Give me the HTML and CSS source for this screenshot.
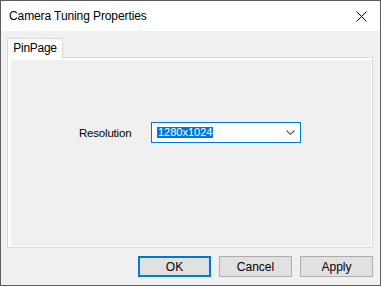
FILE: index.html
```html
<!DOCTYPE html>
<html>
<head>
    <title>Camera Tuning Properties</title>
    <link rel="stylesheet" href="styles.css">
</head>
<body>
    <div class="window">
        <div class="title-bar">
            <span class="title">Camera Tuning Properties</span>
            <button class="close-btn" title="Close">
                <svg width="11" height="11" viewBox="0 0 11 11">
                    <path d="M0.5 0.5 L10.5 10.5 M10.5 0.5 L0.5 10.5" stroke="#000" stroke-width="1" fill="none"/>
                </svg>
            </button>
        </div>

        <div class="dialog-body">
            <div class="tabs">
                <div class="tab active">PinPage</div>
            </div>

            <div class="tab-panel">
                <div class="page">
                    <div class="form-row">
                        <label for="resolution">Resolution</label>
                        <div class="combo" id="resolution">
                            <span class="combo-value">1280x1024</span>
                            <svg class="chevron" width="9" height="5" viewBox="0 0 9 5">
                                <path d="M0.5 0.5 L4.5 4.5 L8.5 0.5" stroke="#606060" stroke-width="1.1" fill="none"/>
                            </svg>
                        </div>
                    </div>
                </div>
            </div>

            <div class="button-row">
                <button class="button default">OK</button>
                <button class="button">Cancel</button>
                <button class="button">Apply</button>
            </div>
        </div>
    </div>
</body>
</html>
```

FILE: styles.css
```css
body {
    margin: 0;
    padding: 0;
    font-family: "Segoe UI", "Liberation Sans", Arial, sans-serif;
    font-size: 12px;
    color: #000;
    background-color: #f0f0f0;
}

/* Window frame */
.window {
    width: 381px;
    height: 286px;
    box-sizing: border-box;
    border: 1px solid #5c5c5c;
    background-color: #f0f0f0;
    display: flex;
    flex-direction: column;
}

.title-bar {
    height: 30px;
    background-color: #ffffff;
    display: flex;
    align-items: center;
    justify-content: space-between;
    flex-shrink: 0;
}

.title {
    margin-left: 8px;
    font-size: 12px;
    letter-spacing: -0.1px;
}

.close-btn {
    width: 46px;
    height: 30px;
    border: none;
    background: transparent;
    padding: 0;
    display: flex;
    align-items: center;
    justify-content: center;
    margin-right: -4px;
}

.dialog-body {
    flex: 1;
    padding: 7px 7px 0 6px;
    display: flex;
    flex-direction: column;
}

/* Tabs */
.tabs {
    display: flex;
    height: 19px;
}

.tab {
    width: 56px;
    box-sizing: border-box;
    border: 1px solid #d9d9d9;
    border-bottom: none;
    background-color: #ffffff;
    text-align: center;
    line-height: 18px;
    position: relative;
    z-index: 1;
    height: 20px;
    letter-spacing: -0.3px;
}

.tab-panel {
    height: 191px;
    box-sizing: border-box;
    border: 1px solid #d9d9d9;
    background-color: #ffffff;
    padding: 2px 1px 1px 3px;
}

.page {
    height: 100%;
    background-color: #f0f0f0;
}

.form-row {
    display: flex;
    align-items: center;
    padding: 62px 0 0 68px;
}

.form-row label {
    width: 72px;
    font-size: 11.5px;
    letter-spacing: -0.2px;
}

.combo {
    width: 150px;
    height: 21px;
    box-sizing: border-box;
    border: 1px solid #0078d7;
    background-color: #ffffff;
    display: flex;
    align-items: center;
    justify-content: space-between;
    padding: 0 5px 0 5px;
}

.combo-value {
    background-color: #0078d7;
    color: #ffffff;
    font-size: 11px;
    line-height: 11px;
    height: 11px;
    padding: 0 1px;
}

/* Buttons */
.button-row {
    display: flex;
    justify-content: flex-end;
    gap: 8px;
    margin-top: 8px;
}

.button {
    width: 73px;
    height: 21px;
    box-sizing: border-box;
    border: 1px solid #adadad;
    background-color: #e1e1e1;
    font-family: inherit;
    font-size: 12px;
    color: #000;
    padding: 0;
}

.button.default {
    border: 2px solid #0078d7;
}
```
